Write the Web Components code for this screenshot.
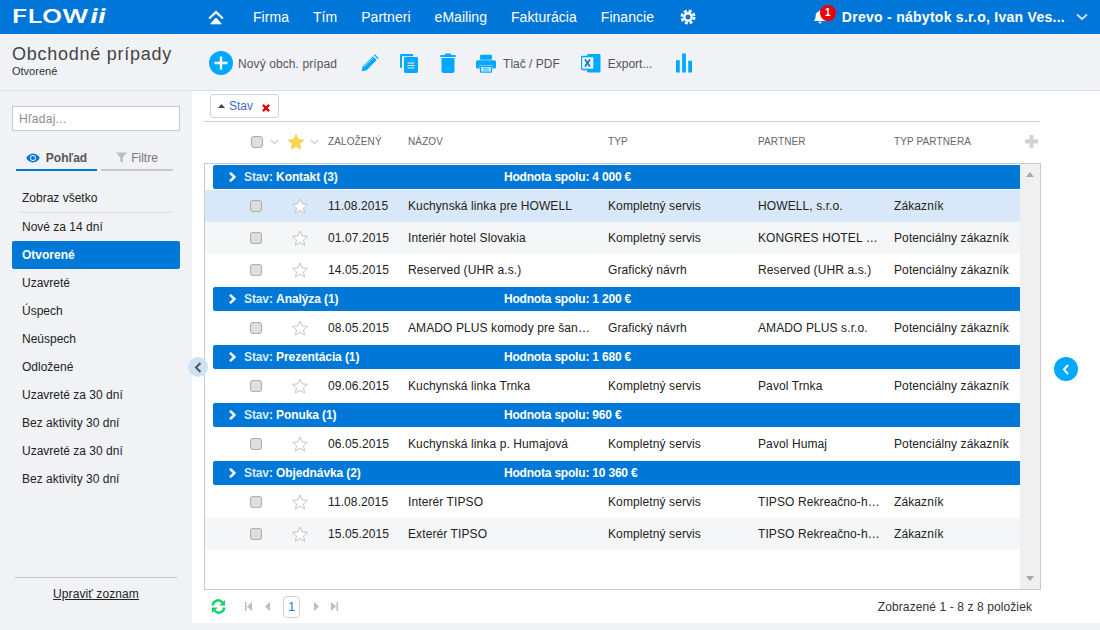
<!DOCTYPE html>
<html lang="sk">
<head>
<meta charset="utf-8">
<title>Obchodné prípady</title>
<style>
  html, body { margin: 0; padding: 0; height: 100%; }
  body { font-family: "Liberation Sans", Arial, sans-serif; background: #f0f2f6; overflow: hidden; }
</style>
</head>
<body>
<flow-app></flow-app>
<script>
// Icons
const ICONS = {
  home: '<svg viewBox="0 0 16 16" width="16" height="16"><path d="M.4 8.800 8 1.400l7.600 7.400-1.500 1.500L8 4.400 1.900 10.300z" fill="#fff"/><path d="M2.800 14.800 8 9l5.200 5.800z" fill="#fff" stroke="#fff" stroke-linejoin="round"/></svg>',
  gear: '<svg viewBox="0 0 16 16" width="16" height="16"><circle cx="8" cy="8" r="6.200" fill="none" stroke="#fff" stroke-width="2.600" stroke-dasharray="2.900 1.970"/><circle cx="8" cy="8" r="3.700" fill="none" stroke="#fff" stroke-width="2.400"/></svg>',
  bell: '<svg viewBox="0 0 14 14" width="14" height="14"><path d="M7 .5c.6 0 1 .4 1 1 2.200.4 3.400 2.200 3.400 4.400 0 3 .9 3.800 1.900 5.100H.7c1-1.300 1.900-2.100 1.900-5.100 0-2.200 1.200-4 3.400-4.400 0-.6.4-1 1-1zM5.400 11.800h3.200c0 1-.7 1.700-1.600 1.700s-1.600-.7-1.600-1.700z" fill="#fff"/></svg>',
  down: '<svg viewBox="0 0 12 8" width="12" height="8"><path d="M1 1.500 6 6l5-4.500" fill="none" stroke="#cfe4f7" stroke-width="1.700"/></svg>',
  plus: '<svg viewBox="0 0 24 24" width="24" height="24"><circle cx="12" cy="12" r="12" fill="#00a8ff"/><path d="M12 5.500v13M5.500 12h13" stroke="#fff" stroke-width="2.400"/></svg>',
  pencil: '<svg viewBox="0 0 20 20" width="18" height="18"><path d="M.8 19.200l1.100-5.400L13.200 2.500l4.300 4.300L6.200 18.100z" fill="#00a8ff"/><path d="M14.400 1.300l1-1 4.300 4.300-1 1z" fill="#00a8ff"/><path d="M3.400 14.200l10-10" stroke="#f0f2f6" stroke-width=".9"/></svg>',
  copy: '<svg viewBox="0 0 20 20" width="20" height="20"><path d="M6 1H2.500A1.500 1.500 0 0 0 1 2.500v11A1.500 1.500 0 0 0 2.500 15H3V3.200h11V1z" fill="#00a8ff"/><rect x="5" y="4" width="14" height="16" rx="1.400" fill="#00a8ff"/><path d="M8.500 10h7M8.500 12.500h7M8.500 15h7" stroke="#f0f2f6" stroke-width="1"/></svg>',
  trash: '<svg viewBox="0 0 16 20" width="16" height="20"><path d="M5 .5h6V2h4.600v2H.4V2H5z" fill="#00a8ff"/><path d="M1.500 5h13v13a2 2 0 0 1-2 2h-9a2 2 0 0 1-2-2z" fill="#00a8ff"/></svg>',
  printer: '<svg viewBox="0 0 22 20" width="20" height="19"><path d="M4.500 6V1.600A1.200 1.200 0 0 1 5.700.4h10.600a1.200 1.200 0 0 1 1.200 1.200V6z" fill="#00a8ff"/><path d="M2 6.500h18a2 2 0 0 1 2 2V14a1.500 1.500 0 0 1-1.500 1.500H18V12H4v3.500H1.500A1.500 1.500 0 0 1 0 14V8.500a2 2 0 0 1 2-2z" fill="#00a8ff"/><rect x="5" y="13" width="12" height="6.500" rx=".8" fill="#f0f2f6" stroke="#00a8ff" stroke-width="1.500"/><path d="M7.500 15.200h7M7.500 17.300h7" stroke="#00a8ff"/></svg>',
  excel: '<svg viewBox="0 0 20 20" width="20" height="20"><rect x="6" y="1" width="13.500" height="18.500" rx="1.500" fill="#00a8ff"/><rect x=".5" y="3.500" width="12.500" height="13" rx="1" fill="#f0f2f6" stroke="#00a8ff" stroke-width="1.300"/><path d="M4 6.500l5 7M9 6.500l-5 7" stroke="#0078d7" stroke-width="1.700"/></svg>',
  bars: '<svg viewBox="0 0 17 20" width="16" height="20"><path d="M0 7h4v13H0zM6.500 0h4v20h-4zM13 7.500h4V20h-4z" fill="#00a8ff"/></svg>',
  eye: '<svg viewBox="0 0 14 10" width="14" height="10"><path d="M7 .5C3.800.5 1.400 2.700.3 5c1.100 2.300 3.500 4.500 6.700 4.500S12.600 7.300 13.700 5C12.600 2.700 10.200.5 7 .5z" fill="#0078d7"/><circle cx="7" cy="5" r="2.900" fill="#f0f2f6"/><circle cx="7" cy="5" r="2" fill="#0078d7"/></svg>',
  funnel: '<svg viewBox="0 0 11 11" width="11" height="11"><path d="M0 .5h11L6.800 5.500V11L4.200 9V5.500z" fill="#bdbdbd"/></svg>',
  sortUp: '<svg viewBox="0 0 7 4" width="7" height="4"><path d="M0 4 3.500 0 7 4z" fill="#444"/></svg>',
  cross: '<svg viewBox="0 0 9 9" width="8" height="8"><path d="M1 1l7 7M8 1 1 8" stroke="#e60000" stroke-width="2.500"/></svg>',
  chevDown: '<svg viewBox="0 0 9 6" width="9" height="6"><path d="M.7.8 4.500 4.700 8.300.8" fill="none" stroke="#c8c8c8" stroke-width="1.200"/></svg>',
  starOn: '<svg viewBox="0 0 16 16" width="16" height="16"><path d="M8 .5l2.300 5 5.400.6-4 3.700 1.100 5.400L8 12.500l-4.800 2.700 1.100-5.400-4-3.700 5.400-.6z" fill="#ffd34d" stroke="#f4c63c" stroke-width=".6"/></svg>',
  starOff: '<svg viewBox="0 0 16 16" width="16" height="16"><path d="M8 1l2.200 4.800 5.200.6-3.900 3.500 1.100 5.100L8 12.400 3.400 15l1.100-5.100L.6 6.400l5.200-.6z" fill="#fff" stroke="#c4c4c4" stroke-width="1"/></svg>',
  addCol: '<svg viewBox="0 0 13 13" width="13" height="13"><path d="M6.500 0v13M0 6.500h13" stroke="#d2d2d2" stroke-width="4"/></svg>',
  chevWhite: '<svg viewBox="0 0 7 10" width="7" height="10"><path d="M1 .8 5.500 5 1 9.200" fill="none" stroke="#fff" stroke-width="2.400"/></svg>',
  sync: '<svg viewBox="0 0 15 15" width="15" height="15"><path d="M1.800 6.500A5.400 5.400 0 0 1 11.400 3.400M13.200 8.500A5.400 5.400 0 0 1 3.600 11.600" fill="none" stroke="#0fd268" stroke-width="2.400"/><path d="M14 .9v5.600H8.400zM1 14.100V8.500h5.600z" fill="#0fd268"/></svg>',
  first: '<svg viewBox="0 0 7 9" width="7" height="9"><path d="M0 0h1.500v9H0zM7 0v9L2 4.500z" fill="#bdbdbd"/></svg>',
  prev: '<svg viewBox="0 0 5 9" width="5" height="9"><path d="M5 0v9L0 4.500z" fill="#bdbdbd"/></svg>',
  next: '<svg viewBox="0 0 5 9" width="5" height="9"><path d="M0 0v9l5-4.500z" fill="#bdbdbd"/></svg>',
  last: '<svg viewBox="0 0 7 9" width="7" height="9"><path d="M7 0H5.500v9H7zM0 0v9l5-4.500z" fill="#bdbdbd"/></svg>',
  scrollUp: '<svg viewBox="0 0 8 5" width="8" height="5"><path d="M0 5 4 0l4 5z" fill="#a9a9a9"/></svg>',
  scrollDown: '<svg viewBox="0 0 8 5" width="8" height="5"><path d="M0 0l4 5 4-5z" fill="#a9a9a9"/></svg>'
};

class FlowIcon extends HTMLElement {
  connectedCallback() {
    const root = this.shadowRoot || this.attachShadow( {mode: 'open'} );
    root.innerHTML = `
      <style>
        :host { display: inline-flex; align-items: center; justify-content: center; flex: none; }
        svg { display: block; }
      </style>
      ${ICONS[this.getAttribute( 'name' )] || ''}
    `;
  }
}
customElements.define( 'flow-icon', FlowIcon );

// Top blue bar
class FlowHeader extends HTMLElement {
  constructor() {
    super();
    this.attachShadow( {mode: 'open'} ).innerHTML = `
      <style>
        :host { display: flex; align-items: center; height: 34px; background: #0076d9; color: #fff; flex: none; }
        .logo { width: 208px; box-sizing: border-box; padding-left: 12px; flex: none; }
        .logo span { display: inline-block; font-family: Inter, "Liberation Sans", sans-serif; font-size: 19px; font-weight: 600; line-height: 34px; transform: scaleX( 1.38 ); transform-origin: left center; letter-spacing: .2px; white-space: nowrap; }
        .logo i { font-weight: 700; margin-left: 1px; letter-spacing: .5px; }
        nav { display: flex; align-items: center; font-size: 14px; letter-spacing: .04px; }
        nav a { margin-left: 24px; }
        nav a:first-of-type { margin-left: 29px; }
        .gear { margin-left: 26px; }
        .user { margin-left: auto; display: flex; align-items: center; font-size: 14px; font-weight: 700; padding-right: 12px; letter-spacing: .27px; }
        .bell { position: relative; display: flex; margin-right: 15px; }
        .badge { position: absolute; left: 7px; top: -5px; width: 16px; height: 16px; border-radius: 50%; background: #f00006; color: #fff; font-size: 10px; font-weight: 700; line-height: 16px; text-align: center; letter-spacing: 0; }
        .caret { margin-left: 11px; }
      </style>
      <div class="logo"><span>FLOW<i>ii</i></span></div>
      <flow-icon name="home"></flow-icon>
      <nav>
        <a>Firma</a><a>Tím</a><a>Partneri</a><a>eMailing</a><a>Fakturácia</a><a>Financie</a>
        <flow-icon class="gear" name="gear"></flow-icon>
      </nav>
      <div class="user">
        <div class="bell"><flow-icon name="bell"></flow-icon><span class="badge">1</span></div>
        <span>Drevo - nábytok s.r.o, Ivan Ves...</span>
        <flow-icon class="caret" name="down"></flow-icon>
      </div>
    `;
  }
}
customElements.define( 'flow-header', FlowHeader );

// Title and action buttons
class FlowToolbar extends HTMLElement {
  constructor() {
    super();
    this.attachShadow( {mode: 'open'} ).innerHTML = `
      <style>
        :host { display: flex; align-items: center; height: 57px; box-sizing: border-box; border-bottom: 1px solid #d9dfe8; background: #f0f2f6; flex: none; }
        .title { width: 209px; box-sizing: border-box; padding-left: 12px; padding-bottom: 2px; flex: none; color: #333; }
        h1 { margin: 0; font-size: 18px; font-weight: 400; line-height: 20px; letter-spacing: .75px; color: #444; }
        small { display: block; font-size: 11px; line-height: 13px; color: #333; margin-top: 1px; }
        .tools { display: flex; align-items: center; font-size: 12px; color: #555; padding-top: 2px; }
        .group { display: flex; align-items: center; }
        .group span { padding-top: 2px; }
        .add span { margin-left: 5px; letter-spacing: .1px; }
        .pencil { margin-left: 24px; }
        .copy { margin-left: 20px; }
        .trash { margin-left: 21px; }
        .print { margin-left: 20px; }
        .print span { margin-left: 7px; }
        .xls { margin-left: 21px; }
        .xls span { margin-left: 7px; }
        .bars { margin-left: 24px; }
      </style>
      <div class="title"><h1>Obchodné prípady</h1><small>Otvorené</small></div>
      <div class="tools">
        <div class="group add"><flow-icon name="plus"></flow-icon><span>Nový obch. prípad</span></div>
        <flow-icon class="pencil" name="pencil"></flow-icon>
        <flow-icon class="copy" name="copy"></flow-icon>
        <flow-icon class="trash" name="trash"></flow-icon>
        <div class="group print"><flow-icon name="printer"></flow-icon><span>Tlač / PDF</span></div>
        <div class="group xls"><flow-icon name="excel"></flow-icon><span>Export...</span></div>
        <flow-icon class="bars" name="bars"></flow-icon>
      </div>
    `;
  }
}
customElements.define( 'flow-toolbar', FlowToolbar );

// Left column
class FlowSidebar extends HTMLElement {
  constructor() {
    super();
    const items = ['Zobraz všetko', 'Nové za 14 dní', 'Otvorené', 'Uzavreté', 'Úspech', 'Neúspech', 'Odložené', 'Uzavreté za 30 dní', 'Bez aktivity 30 dní', 'Uzavreté za 30 dní', 'Bez aktivity 30 dní'];
    this.attachShadow( {mode: 'open'} ).innerHTML = `
      <style>
        :host { display: flex; flex-direction: column; width: 192px; flex: none; box-sizing: border-box; padding: 15px 12px 0; position: relative; z-index: 1; font-size: 12px; color: #222; }
        input { display: block; width: 168px; height: 25px; box-sizing: border-box; border: 1px solid #c9c9c9; background: #fff; padding: 0 6px; margin: 0; font: 12px "Liberation Sans", Arial, sans-serif; letter-spacing: .3px; outline: none; }
        input::placeholder { color: #8d8d8d; opacity: 1; }
        .tabs { display: flex; margin: 17px 7px 0 4px; gap: 4px; }
        .tab { height: 23px; box-sizing: border-box; display: flex; align-items: center; justify-content: center; gap: 6px; padding-bottom: 2px; color: #777; }
        .on { width: 81px; border-bottom: 2px solid #0078d7; color: #555; font-weight: 700; }
        .off { width: 72px; border-bottom: 2px solid #c9c9c9; gap: 4px; }
        ul { list-style: none; margin: 13px 0 0; padding: 0; }
        li { height: 28px; line-height: 28px; padding-left: 10px; border-radius: 2px; }
        li:first-child { height: 29px; line-height: 28px; position: relative; }
        li:first-child::after { content: ''; position: absolute; left: 8px; right: 8px; bottom: 0; border-bottom: 1px solid #dcdcdc; }
        li.active { background: #0078d7; color: #fff; font-weight: 700; }
        .foot { margin: auto 3px 0; height: 53px; box-sizing: border-box; border-top: 1px solid #c9c9c9; text-align: center; padding-top: 9px; letter-spacing: .1px; }
        .foot a { color: #222; text-decoration: underline; }
        .handle { position: absolute; right: -16px; top: 266px; width: 20px; height: 20px; border-radius: 50%; background: #cde3f5; display: flex; align-items: center; justify-content: center; }
        .handle svg { display: block; }
      </style>
      <input placeholder="Hľadaj...">
      <div class="tabs">
        <div class="tab on"><flow-icon name="eye"></flow-icon>Pohľad</div>
        <div class="tab off"><flow-icon name="funnel"></flow-icon>Filtre</div>
      </div>
      <ul>${items.map( ( item ) => `<li class="${item === 'Otvorené' ? 'active' : ''}">${item}</li>` ).join( '' )}</ul>
      <div class="foot"><a>Upraviť zoznam</a></div>
      <div class="handle"><svg viewBox="0 0 8 11" width="8" height="11"><path d="M6.500 1 2 5.500 6.500 10" fill="none" stroke="#4a5560" stroke-width="2"/></svg></div>
    `;
  }
}
customElements.define( 'flow-sidebar', FlowSidebar );

// Group band
class FlowGroup extends HTMLElement {
  constructor() {
    super();
    this.attachShadow( {mode: 'open'} ).innerHTML = `
      <style>
        :host { display: flex; align-items: center; height: 24px; margin: 1px 0 1px 8px; background: #0078d7; color: #fff; font-size: 12px; border-radius: 2px 0 0 2px; }
        flow-icon { margin-left: 16px; }
        .name { margin-left: 8px; width: 260px; flex: none; letter-spacing: -.1px; }
        b { font-weight: 700; }
        .sum { font-weight: 700; letter-spacing: -.2px; }
        .name span { color: #d9ecfb; font-weight: 700; }
      </style>
      <flow-icon name="chevWhite"></flow-icon>
      <div class="name"><span>Stav:</span> <b><slot name="name"></slot></b></div>
      <div class="sum">Hodnota spolu: <slot name="sum"></slot></div>
    `;
  }
}
customElements.define( 'flow-group', FlowGroup );

// Data row
class FlowRow extends HTMLElement {
  constructor() {
    super();
    this.attachShadow( {mode: 'open'} ).innerHTML = `
      <style>
        :host { display: grid; grid-template-columns: 57px 46px 20px 80px 200px 150px 136px 1fr; align-items: center; height: 32px; font-size: 12px; color: #222; background: #fff; }
        :host([striped]) { background: #f5f6f8; }
        :host([selected]) { background: #d8e8f9; }
        .box { width: 12px; height: 12px; box-sizing: border-box; border: 1px solid #aaa; border-radius: 3px; background: #dedede; justify-self: end; }
        flow-icon { justify-self: end; }
        .cell { white-space: nowrap; letter-spacing: .1px; }
      </style>
      <div class="box"></div>
      <flow-icon name="starOff"></flow-icon>
      <span></span>
      <div class="cell"></div><div class="cell"></div><div class="cell"></div><div class="cell"></div><div class="cell"></div>
    `;
  }

  set cells( values ) {
    this.shadowRoot.querySelectorAll( '.cell' ).forEach( ( cell, index ) => {
      cell.textContent = values[index];
    } );
  }
}
customElements.define( 'flow-row', FlowRow );

// The grid with its sort chip, heading and pager
class FlowGrid extends HTMLElement {
  constructor() {
    super();
    const data = [
      {name: 'Kontakt (3)', sum: '4 000 €', rows: [
        ['11.08.2015', 'Kuchynská linka pre HOWELL', 'Kompletný servis', 'HOWELL, s.r.o.', 'Zákazník'],
        ['01.07.2015', 'Interiér hotel Slovakia', 'Kompletný servis', 'KONGRES HOTEL …', 'Potenciálny zákazník'],
        ['14.05.2015', 'Reserved (UHR a.s.)', 'Grafický návrh', 'Reserved (UHR a.s.)', 'Potenciálny zákazník']
      ]},
      {name: 'Analýza (1)', sum: '1 200 €', rows: [
        ['08.05.2015', 'AMADO PLUS komody pre šan…', 'Grafický návrh', 'AMADO PLUS s.r.o.', 'Potenciálny zákazník']
      ]},
      {name: 'Prezentácia (1)', sum: '1 680 €', rows: [
        ['09.06.2015', 'Kuchynská linka Trnka', 'Kompletný servis', 'Pavol Trnka', 'Potenciálny zákazník']
      ]},
      {name: 'Ponuka (1)', sum: '960 €', rows: [
        ['06.05.2015', 'Kuchynská linka p. Humajová', 'Kompletný servis', 'Pavol Humaj', 'Potenciálny zákazník']
      ]},
      {name: 'Objednávka (2)', sum: '10 360 €', rows: [
        ['11.08.2015', 'Interér TIPSO', 'Kompletný servis', 'TIPSO Rekreačno-h…', 'Zákazník'],
        ['15.05.2015', 'Exterér TIPSO', 'Kompletný servis', 'TIPSO Rekreačno-h…', 'Zákazník']
      ]}
    ];

    this.attachShadow( {mode: 'open'} ).innerHTML = `
      <style>
        :host { display: flex; flex-direction: column; flex: 1; min-width: 0; height: 532px; box-sizing: border-box; background: #fff; padding: 3px 59px 0 12px; position: relative; }
        .chips { height: 28px; flex: none; box-sizing: border-box; margin-right: 1px; padding-left: 6px; border-bottom: 1px solid #cfcfcf; }
        .chip { display: inline-flex; align-items: center; height: 24px; width: 69px; box-sizing: border-box; border: 1px solid #d2d2d2; border-radius: 3px; padding-left: 7px; font-size: 12px; color: #4a66c8; }
        .chip span { margin-left: 4px; }
        .chip flow-icon:last-child { margin-left: 9px; margin-top: 3px; }
        .head { display: grid; grid-template-columns: 47px 12px 25px 16px 24px 80px 200px 150px 136px 1fr; align-items: center; height: 41px; box-sizing: border-box; padding-bottom: 2px; flex: none; font-size: 10px; color: #666; letter-spacing: .12px; }
        .head .box { width: 12px; height: 12px; box-sizing: border-box; border: 1px solid #aaa; border-radius: 3px; background: #dedede; }
        .head .hi { display: flex; align-items: center; }
        .add { display: flex; align-items: center; justify-content: flex-end; padding-right: 3px; }
        .frame { flex: 1; min-height: 0; display: flex; border: 1px solid #c9c9c9; }
        .list { flex: 1; min-width: 0; }
        .bar { width: 20px; flex: none; background: #f0f0f0; display: flex; flex-direction: column; justify-content: space-between; align-items: center; padding: 8px 0; box-sizing: border-box; }
        .pager { display: flex; align-items: center; height: 33px; flex: none; font-size: 12px; color: #333; padding-left: 7px; }
        .nums { display: flex; align-items: center; margin-left: 19px; }
        .nums .n { width: 17px; height: 22px; box-sizing: border-box; border: 1px solid #cfcfcf; border-radius: 4px; text-align: center; line-height: 20px; color: #0078d7; margin: 0 14px 0 13px; }
        .nums .g1 { margin-left: 13px; }
        .nums .g2 { margin-left: 12px; }
        .count { margin-left: auto; padding-right: 9px; letter-spacing: .1px; }
        .side { position: absolute; right: 22px; top: 266px; width: 24px; height: 24px; border-radius: 50%; background: #00a8ff; display: flex; align-items: center; justify-content: center; }
        .side svg { display: block; }
      </style>
      <div class="chips"><div class="chip"><flow-icon name="sortUp"></flow-icon><span>Stav</span><flow-icon name="cross"></flow-icon></div></div>
      <div class="head">
        <span></span>
        <div class="box"></div>
        <div class="hi" style="padding-left:7px"><flow-icon name="chevDown"></flow-icon></div>
        <flow-icon name="starOn"></flow-icon>
        <div class="hi" style="padding-left:6px"><flow-icon name="chevDown"></flow-icon></div>
        <div>ZALOŽENÝ</div><div>NÁZOV</div><div>TYP</div><div>PARTNER</div>
        <div class="add"><span style="margin-right:auto">TYP PARTNERA</span><flow-icon name="addCol"></flow-icon></div>
      </div>
      <div class="frame">
        <div class="list"></div>
        <div class="bar"><flow-icon name="scrollUp"></flow-icon><flow-icon name="scrollDown"></flow-icon></div>
      </div>
      <div class="pager">
        <flow-icon name="sync"></flow-icon>
        <div class="nums">
          <flow-icon name="first"></flow-icon><flow-icon class="g1" name="prev"></flow-icon>
          <div class="n">1</div>
          <flow-icon name="next"></flow-icon><flow-icon class="g2" name="last"></flow-icon>
        </div>
        <div class="count">Zobrazené 1 - 8 z 8 položiek</div>
      </div>
      <div class="side"><svg viewBox="0 0 8 11" width="8" height="11"><path d="M6 1 2 5.500 6 10" fill="none" stroke="#fff" stroke-width="2"/></svg></div>
    `;

    const list = this.shadowRoot.querySelector( '.list' );

    data.forEach( ( group ) => {
      const band = document.createElement( 'flow-group' );
      band.innerHTML = `<span slot="name">${group.name}</span><span slot="sum">${group.sum}</span>`;
      list.appendChild( band );

      group.rows.forEach( ( cells, index ) => {
        const row = document.createElement( 'flow-row' );
        row.cells = cells;
        if( index % 2 === 1 ) row.setAttribute( 'striped', '' );
        if( cells[1] === 'Kuchynská linka pre HOWELL' ) row.setAttribute( 'selected', '' );
        list.appendChild( row );
      } );
    } );
  }
}
customElements.define( 'flow-grid', FlowGrid );

// Page shell
class FlowApp extends HTMLElement {
  constructor() {
    super();
    this.attachShadow( {mode: 'open'} ).innerHTML = `
      <style>
        :host { display: flex; flex-direction: column; height: 630px; background: #f0f2f6; }
        .body { display: flex; flex: 1; min-height: 0; }
      </style>
      <flow-header></flow-header>
      <flow-toolbar></flow-toolbar>
      <div class="body"><flow-sidebar></flow-sidebar><flow-grid></flow-grid></div>
    `;
  }
}
customElements.define( 'flow-app', FlowApp );
</script>
</body>
</html>
